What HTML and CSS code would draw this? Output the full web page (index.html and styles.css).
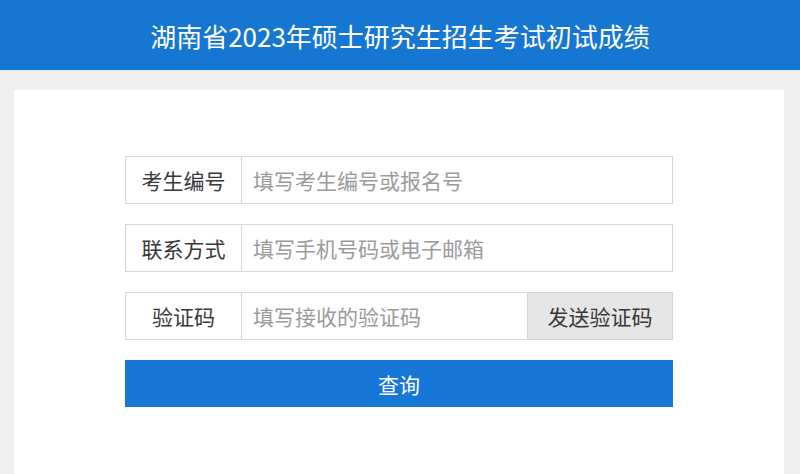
FILE: index.html
```html
<!DOCTYPE html>
<html lang="zh-CN">
<head>
<meta charset="utf-8">
<title>湖南省2023年硕士研究生招生考试初试成绩</title>
<link rel="stylesheet" href="styles.css">
</head>
<body>
<header class="topbar">
  <h1 class="title">湖南省2023年硕士研究生招生考试初试成绩</h1>
</header>
<main class="page">
  <section class="panel">
    <form class="form">
      <div class="row">
        <label class="label">考生编号</label>
        <input class="field" type="text" placeholder="填写考生编号或报名号">
      </div>
      <div class="row">
        <label class="label">联系方式</label>
        <input class="field" type="text" placeholder="填写手机号码或电子邮箱">
      </div>
      <div class="row">
        <label class="label">验证码</label>
        <input class="field" type="text" placeholder="填写接收的验证码">
        <button class="send" type="button">发送验证码</button>
      </div>
      <button class="submit" type="button">查询</button>
    </form>
  </section>
</main>
</body>
</html>
```
FILE: styles.css
```css
html, body {
  margin: 0;
  padding: 0;
  height: 100%;
}
body {
  background: #efefef;
  font-family: "Noto Sans CJK SC", "Noto Sans", "Liberation Sans", sans-serif;
  overflow: hidden;
}
.topbar {
  height: 70px;
  background: #1677d2;
  border-bottom: 2px solid #e6eef7;
  display: flex;
  align-items: center;
  justify-content: center;
}
.title {
  margin: 0;
  color: #fff;
  font-weight: normal;
  font-size: 26px;
  letter-spacing: 0;
}
.page {
  padding: 18px 16px 0 14px;
}
.panel {
  background: #fff;
  height: 384px;
  padding-top: 66px;
  box-sizing: border-box;
}
.form {
  width: 548px;
  margin: 0 auto;
  display: flex;
  flex-direction: column;
}
.row {
  display: flex;
  height: 48px;
  border: 1px solid #d6d6d6;
  box-sizing: border-box;
  margin-bottom: 20px;
}
.label {
  width: 115px;
  flex: none;
  border-right: 1px solid #d6d6d6;
  display: flex;
  align-items: center;
  justify-content: center;
  font-size: 21px;
  color: #383838;
}
.field {
  flex: 1;
  min-width: 0;
  border: none;
  outline: none;
  padding: 0 11px;
  font-family: inherit;
  font-size: 21px;
  color: #333;
  background: transparent;
}
.field::placeholder {
  color: #9a9a9a;
}
.send {
  width: 145px;
  flex: none;
  border: none;
  border-left: 1px solid #d6d6d6;
  background: #e6e6e6;
  font-family: inherit;
  font-size: 21px;
  color: #383838;
  padding: 0;
}
.submit {
  height: 47px;
  border: none;
  background: #1677d6;
  color: #fff;
  font-family: inherit;
  font-size: 21px;
  padding: 0;
}
```
